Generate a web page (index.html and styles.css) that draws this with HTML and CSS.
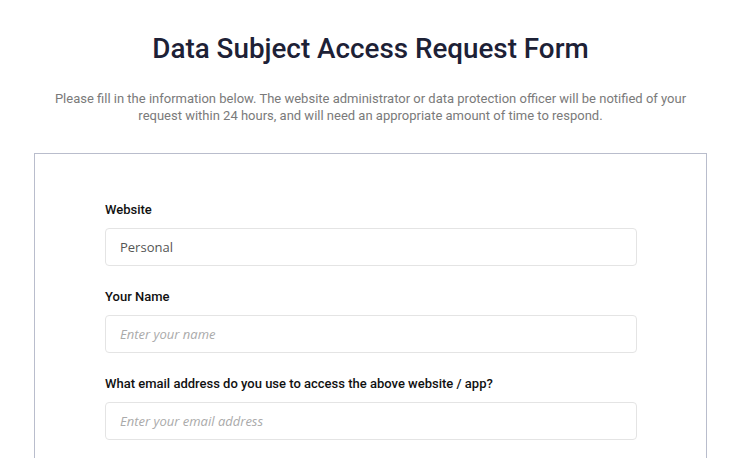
FILE: index.html
```html
<!DOCTYPE html>
<html lang="en">
<head>
    <meta charset="UTF-8">
    <meta name="viewport" content="width=device-width, initial-scale=1.0">
    <title>Data Subject Access Request Form</title>
    <link rel="stylesheet" href="styles.css">
</head>
<body>
    <div class="page">
        <h1>Data Subject Access Request Form</h1>
        <p class="intro">Please fill in the information below. The website administrator or data protection officer will be notified of your request within 24 hours, and will need an appropriate amount of time to respond.</p>

        <div class="card">
            <form id="dsar-form">
                <div class="field">
                    <label for="website">Website</label>
                    <input type="text" id="website" name="website" value="Personal">
                </div>

                <div class="field">
                    <label for="name">Your Name</label>
                    <input type="text" id="name" name="name" placeholder="Enter your name">
                </div>

                <div class="field">
                    <label for="email">What email address do you use to access the above website / app?</label>
                    <input type="email" id="email" name="email" placeholder="Enter your email address">
                </div>
            </form>
        </div>
    </div>
</body>
</html>
```

FILE: styles.css
```css
/* Page */
body {
    font-family: Roboto, "Liberation Sans", Arial, sans-serif;
    background-color: #ffffff;
    color: #222;
    margin: 0;
    padding: 0;
}

.page {
    padding: 33px 33px 0 34px;
    text-align: center;
}

/* Heading */
h1 {
    font-size: 27.8px;
    font-weight: 500;
    color: #1d2136;
    margin: 0 0 25px 0;
    line-height: 32px;
}

.intro {
    font-size: 13px;
    line-height: 17px;
    color: #7a7a7a;
    margin: 0 auto 29px auto;
    max-width: 640px;
}

/* Form card */
.card {
    border: 1px solid #b9bdcc;
    border-bottom: none;
    padding: 48px 69px 40px 70px;
    text-align: left;
}

.field {
    margin-bottom: 23px;
}

label {
    display: block;
    font-size: 13px;
    font-weight: 500;
    color: #111;
    line-height: 16px;
    margin-bottom: 10px;
}

input[type="text"], input[type="email"] {
    box-sizing: border-box;
    width: 100%;
    height: 38px;
    padding: 0 14px;
    border: 1px solid #e4e4e4;
    border-radius: 4px;
    background-color: #fff;
    font-family: "Open Sans", sans-serif;
    font-size: 13px;
    color: #555;
    outline: none;
}

input::placeholder {
    font-style: italic;
    color: #aaa;
}
```
